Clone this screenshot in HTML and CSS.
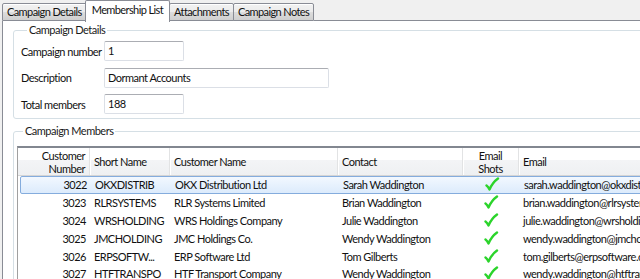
FILE: index.html
```html
<!DOCTYPE html>
<html lang="en">
<head>
    <meta charset="UTF-8">
    <title>Campaign - Membership List</title>
    <link rel="stylesheet" href="styles.css">
</head>
<body>
    <div class="tabs">
        <div class="tab">Campaign Details</div>
        <div class="tab tab-active">Membership List</div>
        <div class="tab">Attachments</div>
        <div class="tab">Campaign Notes</div>
        <div class="tab-fill"></div>
    </div>

    <div class="page">
        <fieldset class="group group-details">
            <legend>Campaign Details</legend>
            <div class="field">
                <label>Campaign number</label>
                <div class="textbox short">1</div>
            </div>
            <div class="field">
                <label>Description</label>
                <div class="textbox long">Dormant Accounts</div>
            </div>
            <div class="field">
                <label>Total members</label>
                <div class="textbox short">188</div>
            </div>
        </fieldset>

        <fieldset class="group group-members">
            <legend>Campaign Members</legend>
            <div class="grid">
                <div class="row header">
                    <div class="cell num">Customer<br>Number</div>
                    <div class="cell">Short Name</div>
                    <div class="cell">Customer Name</div>
                    <div class="cell">Contact</div>
                    <div class="cell center">Email<br>Shots</div>
                    <div class="cell">Email</div>
                </div>
                <div id="rows"></div>
            </div>
        </fieldset>
    </div>

    <script>
        const members = [
            ['3022', 'OKXDISTRIB', 'OKX Distribution Ltd', 'Sarah Waddington', 'sarah.waddington@okxdistrib.com'],
            ['3023', 'RLRSYSTEMS', 'RLR Systems Limited', 'Brian Waddington', 'brian.waddington@rlrsystems.com'],
            ['3024', 'WRSHOLDING', 'WRS Holdings Company', 'Julie Waddington', 'julie.waddington@wrsholding.com'],
            ['3025', 'JMCHOLDING', 'JMC Holdings Co.', 'Wendy Waddington', 'wendy.waddington@jmcholding.com'],
            ['3026', 'ERPSOFTW...', 'ERP Software Ltd', 'Tom Gilberts', 'tom.gilberts@erpsoftware.com'],
            ['3027', 'HTFTRANSPO', 'HTF Transport Company', 'Wendy Waddington', 'wendy.waddington@htftransport.com']
        ];

        const check = '<svg width="16" height="15" viewBox="0 0 16 15"><path d="M2.5 8.5 Q4 9.5 5.5 12.5 Q8.5 5.5 14 1.5" fill="none" stroke="#2bd42b" stroke-width="2.4" stroke-linecap="round" stroke-linejoin="round"/></svg>';

        let html = '';
        members.forEach(function(m, i) {
            html += '<div class="row' + (i === 0 ? ' selected' : '') + '">' +
                '<div class="cell num">' + m[0] + '</div>' +
                '<div class="cell">' + m[1] + '</div>' +
                '<div class="cell">' + m[2] + '</div>' +
                '<div class="cell">' + m[3] + '</div>' +
                '<div class="cell center">' + check + '</div>' +
                '<div class="cell">' + m[4] + '</div>' +
                '</div>';
        });
        document.getElementById('rows').innerHTML = html;
    </script>
</body>
</html>
```

FILE: styles.css
```css
* {
    box-sizing: border-box;
    margin: 0;
    padding: 0;
}

body {
    font-family: 'Lato', 'Liberation Sans', sans-serif;
    font-size: 11px;
    letter-spacing: -0.5px;
    color: #111;
    background: #f0f0f0;
    width: 640px;
    height: 279px;
    overflow: hidden;
}

/* tab strip */
.tabs {
    display: flex;
    align-items: flex-end;
    height: 21px;
    padding-left: 2px;
}

.tab {
    height: 18px;
    padding: 0 4px;
    line-height: 16px;
    letter-spacing: -0.6px;
    background: linear-gradient(#f2f2f2, #ebebeb 50%, #dddddd 51%, #cfcfcf);
    border: 1px solid #898c95;
    margin-right: -1px;
    white-space: nowrap;
    box-shadow: inset 0 1px 0 #fff;
    border-radius: 2px 2px 0 0;
}

.tab-active {
    height: 22px;
    margin: 0 -1px -1px -1px;
    padding: 0 6px;
    line-height: 18px;
    background: #fff;
    border-bottom: none;
    position: relative;
    z-index: 1;
    box-shadow: none;
}

.tab-fill {
    flex: 1;
    align-self: stretch;
    border-bottom: 1px solid #898c95;
    margin-left: 1px;
}

/* page */
.page {
    margin-left: 2px;
    background: #fff;
    border-left: 1px solid #898c95;
    height: 258px;
    padding: 2px 0 0 10px;
}

.group {
    border: 1px solid #d5dfe5;
    border-radius: 3px;
    margin-right: -20px;
    padding: 0;
}

.group legend {
    margin-left: 6px;
    padding: 0 2px;
    line-height: 14px;
    color: #1a1a1a;
}

.group-details {
    height: 96px;
    padding: 4px 0 0 7px;
}

.field {
    display: flex;
    align-items: center;
    height: 20px;
    margin-bottom: 6.5px;
}

.field label {
    width: 83px;
    white-space: nowrap;
}

.textbox {
    height: 20px;
    border: 1px solid #dbdfe6;
    border-top-color: #abadb3;
    border-radius: 2px;
    padding: 0 3px;
    line-height: 18px;
}

.textbox.short {
    width: 80px;
}

.textbox.long {
    width: 225px;
}

.group-members {
    margin-top: 5px;
    height: 200px;
    padding: 8px 0 0 3px;
}

/* data grid */
.grid {
    border-top: 2px solid #828790;
    border-left: 1px solid #a0a0a0;
    height: 200px;
    width: 700px;
}

.row {
    display: grid;
    grid-template-columns: 72px 80px 168px 125px 56px 1fr;
    height: 17.8px;
    align-items: center;
    white-space: nowrap;
}

.row.header {
    height: 28px;
    align-items: stretch;
    background: linear-gradient(#ffffff, #ffffff 45%, #f3f4f6 46%, #eef0f2);
    border-bottom: 1px solid #d5d5d5;
    line-height: 13px;
}

.header .cell {
    display: flex;
    align-items: center;
    border-right: 1px solid #e2e3e4;
    box-shadow: 1px 0 0 #fff;
}

.header .cell.num {
    justify-content: flex-end;
    text-align: right;
}

.header .cell.center {
    justify-content: center;
    text-align: center;
    height: auto;
}

.cell {
    padding: 0 4px;
    overflow: hidden;
}

.cell.num {
    text-align: right;
}

.cell.center {
    text-align: center;
    height: 15px;
}

.cell svg {
    display: block;
    margin: 0 auto;
}

.row.selected {
    margin-left: 2px;
    grid-template-columns: 70px 80px 168px 125px 56px 1fr;
    background: linear-gradient(#f2f8ff, #dcebfc);
    border: 1px solid #84acdd;
    border-radius: 2px;
}
```
